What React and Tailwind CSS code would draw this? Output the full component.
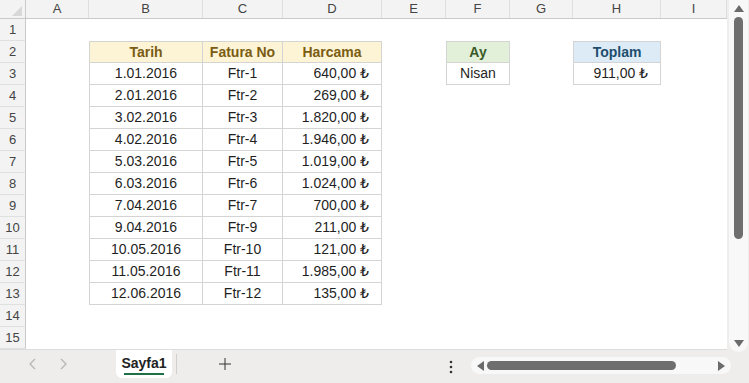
import React from "react";

// sütun genişlikleri (satır başlığı 26px hariç)
const columns = [
  { key: "A", w: "w-[63px]" },
  { key: "B", w: "w-[114px]" },
  { key: "C", w: "w-[80px]" },
  { key: "D", w: "w-[99px]" },
  { key: "E", w: "w-[64px]" },
  { key: "F", w: "w-[64px]" },
  { key: "G", w: "w-[63px]" },
  { key: "H", w: "w-[88px]" },
  { key: "I", w: "w-[66px]" },
];

const data = [
  ["1.01.2016", "Ftr-1", "640,00 ₺"],
  ["2.01.2016", "Ftr-2", "269,00 ₺"],
  ["3.02.2016", "Ftr-3", "1.820,00 ₺"],
  ["4.02.2016", "Ftr-4", "1.946,00 ₺"],
  ["5.03.2016", "Ftr-5", "1.019,00 ₺"],
  ["6.03.2016", "Ftr-6", "1.024,00 ₺"],
  ["7.04.2016", "Ftr-7", "700,00 ₺"],
  ["9.04.2016", "Ftr-9", "211,00 ₺"],
  ["10.05.2016", "Ftr-10", "121,00 ₺"],
  ["11.05.2016", "Ftr-11", "1.985,00 ₺"],
  ["12.06.2016", "Ftr-12", "135,00 ₺"],
];

const rowNumbers = Array.from({ length: 15 }, (_, i) => i + 1);

const border = "border-[#d4d4d4]";

// hücre içeriği ve stili
const getCell = (r, c) => {
  if (r === 2) {
    if (c === "B")
      return { text: "Tarih", cls: `bg-[#fdf4d6] text-[#7a5c12] font-bold justify-center border-l border-t ${border}` };
    if (c === "C")
      return { text: "Fatura No", cls: `bg-[#fdf4d6] text-[#7a5c12] font-bold justify-center border-t ${border}` };
    if (c === "D")
      return { text: "Harcama", cls: `bg-[#fdf4d6] text-[#7a5c12] font-bold justify-center border-t ${border}` };
    if (c === "F")
      return { text: "Ay", cls: `bg-[#e2efd9] text-[#3a5a28] font-bold justify-center border-l border-t ${border}` };
    if (c === "H")
      return { text: "Toplam", cls: `bg-[#dcebf6] text-[#1f4e6e] font-bold justify-center border-l border-t ${border}` };
  }
  if (r >= 3 && r <= 13) {
    const row = data[r - 3];
    if (c === "B") return { text: row[0], cls: `justify-center border-l ${border}` };
    if (c === "C") return { text: row[1], cls: "justify-center" };
    if (c === "D") return { text: row[2], cls: "justify-end pr-[12px]" };
  }
  if (r === 3) {
    if (c === "F") return { text: "Nisan", cls: `justify-center border-l ${border}` };
    if (c === "H") return { text: "911,00 ₺", cls: `justify-end pr-[12px] border-l ${border}` };
  }
  return null;
};

const Triangle = ({ dir }) => {
  const points = {
    up: "0,7 5,0 10,7",
    down: "0,0 10,0 5,7",
    left: "7,0 7,10 0,5",
    right: "0,0 0,10 7,5",
  };
  const vertical = dir === "up" || dir === "down";
  return (
    <svg width={vertical ? 10 : 7} height={vertical ? 7 : 10}>
      <polygon points={points[dir]} fill="#6b6b6b" />
    </svg>
  );
};

const App = () => {
  return (
    <div
      className="w-[749px] h-[383px] bg-[#efedec] flex flex-col overflow-hidden text-[14px] text-[#1f1f1f]"
      style={{ fontFamily: '"Liberation Sans", "DejaVu Sans", sans-serif' }}
    >
      <div className="flex h-[350px]">
        {/* Sheet */}
        <div className="w-[727px] flex flex-col bg-white border-b border-[#dcdcdc]">
          {/* Column headers */}
          <div className="flex h-[19px] bg-[#f3f3f3] border-b border-[#c9c9c9] text-[13px] text-[#444]">
            <div className="w-[26px] border-r border-[#c9c9c9] relative">
              <svg width="10" height="10" className="absolute right-[3px] bottom-[2px]">
                <polygon points="10,0 10,10 0,10" fill="#d8d8d8" />
              </svg>
            </div>
            {columns.map((col) => (
              <div
                key={col.key}
                className={`${col.w} flex items-center justify-center border-r border-[#dedede]`}
              >
                {col.key}
              </div>
            ))}
          </div>

          {/* Rows */}
          {rowNumbers.map((r) => (
            <div key={r} className="flex h-[22px]">
              <div className="w-[26px] bg-[#f3f3f3] border-r border-b border-r-[#c9c9c9] border-b-[#e0e0e0] flex items-center justify-center text-[13px] text-[#444]">
                {r}
              </div>
              {columns.map((col) => {
                const cell = getCell(r, col.key);
                if (!cell) return <div key={col.key} className={col.w}></div>;
                return (
                  <div
                    key={col.key}
                    className={`${col.w} flex items-center border-r border-b ${border} ${cell.cls}`}
                  >
                    {cell.text}
                  </div>
                );
              })}
            </div>
          ))}
        </div>

        {/* Vertical scrollbar */}
        <div className="w-[22px] pl-[2px] pr-[1px]">
          <div className="h-[352px] bg-[#f8f8f8] rounded-b-full flex flex-col items-center pt-[5px]">
            <Triangle dir="up" />
            <div className="w-[9px] h-[222px] mt-[5px] rounded-full bg-[#6e6e6e]"></div>
            <div className="flex-1"></div>
            <div className="mb-[5px]">
              <Triangle dir="down" />
            </div>
          </div>
        </div>
      </div>

      {/* Sheet tabs */}
      <div className="flex items-start h-[33px]">
        <div className="w-[116px] h-[28px] flex items-center">
          <svg width="8" height="12" className="ml-[28px]">
            <polyline points="7,1 2,6 7,11" fill="none" stroke="#b5b5b5" strokeWidth="1.3" />
          </svg>
          <svg width="8" height="12" className="ml-[24px]">
            <polyline points="1,1 6,6 1,11" fill="none" stroke="#b5b5b5" strokeWidth="1.3" />
          </svg>
        </div>
        <div className="w-[56px] h-[28px] bg-white rounded-b-md flex flex-col items-center justify-center">
          <span className="font-bold text-[14px] text-[#222] leading-[16px] mt-[2px]">Sayfa1</span>
          <div className="w-[40px] h-[2px] bg-[#1e7145] mt-[2px]"></div>
        </div>
        <div className="w-px h-[20px] bg-[#cfcfcf] ml-[4px] mt-[4px]"></div>
        <div className="ml-[42px] h-[28px] flex items-center">
          <svg width="12" height="12">
            <line x1="6" y1="0" x2="6" y2="12" stroke="#333" strokeWidth="1" />
            <line x1="0" y1="6" x2="12" y2="6" stroke="#333" strokeWidth="1" />
          </svg>
        </div>
        <div className="ml-[218px] h-[34px] flex items-center">
          <svg width="4" height="14">
            <circle cx="2" cy="2" r="1.3" fill="#333" />
            <circle cx="2" cy="7" r="1.3" fill="#333" />
            <circle cx="2" cy="12" r="1.3" fill="#333" />
          </svg>
        </div>
        <div className="ml-[18px] mt-[7px] w-[260px] h-[17px] rounded-full bg-[#f8f8f8] flex items-center px-[6px]">
          <Triangle dir="left" />
          <div className="ml-[3px] w-[189px] h-[9px] rounded-full bg-[#6e6e6e]"></div>
          <div className="flex-1"></div>
          <Triangle dir="right" />
        </div>
      </div>
    </div>
  );
};

export default App;
